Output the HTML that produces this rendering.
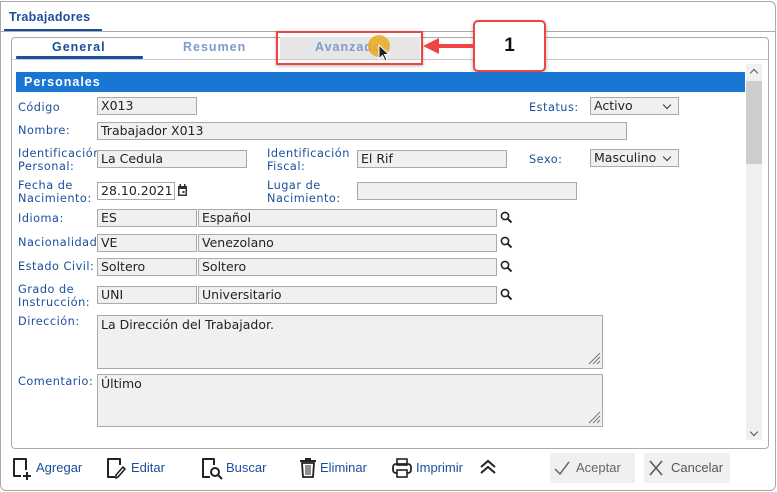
<!DOCTYPE html>
<html><head><meta charset="utf-8"><style>
*{box-sizing:border-box;margin:0;padding:0}
body{width:777px;height:492px;background:#fff;position:relative;overflow:hidden;font-family:"DejaVu Sans","Liberation Sans",sans-serif}
.a{position:absolute}
.lb{position:absolute;color:#1a4f9c;font-size:11.3px;line-height:13px;letter-spacing:0.5px}
.in{position:absolute;background:#f0f0f0;border:1px solid #aaa;height:18px;font-size:12.5px;line-height:16px;padding-left:3px;color:#222;white-space:nowrap;overflow:hidden}
.sel::after{content:"";position:absolute;right:8px;top:4px;width:5px;height:5px;border-right:1.5px solid #333;border-bottom:1.5px solid #333;transform:rotate(45deg)}
.sel{background:#f0f0f0}
.mag{position:absolute;width:13px;height:13px}
.ft{position:absolute;top:460px;font-size:13px;color:#1a4f9c;font-family:"Liberation Sans",sans-serif}
</style></head><body>
<div class="a" style="left:0;top:1px;width:776px;height:490px;border:1px solid #aaa;border-radius:0 6px 6px 6px"></div>
<div class="a" style="left:1px;top:31px;width:774px;height:1px;background:#aaa"></div>
<div class="a" style="left:9px;top:10px;font-size:12.5px;font-weight:bold;color:#1a4f9c;font-family:'Liberation Sans',sans-serif;letter-spacing:0.3px">Trabajadores</div>
<div class="a" style="left:4px;top:29px;width:98px;height:2px;background:#1a4f9c"></div>
<div class="a" style="left:11px;top:37px;width:758px;height:412px;border:1px solid #aaa;border-radius:4px"></div>
<div class="a" style="left:12px;top:59px;width:756px;height:1px;background:#ccc"></div>
<div class="a" style="left:52px;top:40px;font-size:12.5px;font-weight:bold;color:#1a4f9c;letter-spacing:1px;font-family:'Liberation Sans',sans-serif">General</div>
<div class="a" style="left:16px;top:56px;width:127px;height:3px;background:#1a4f9c;border-radius:1px"></div>
<div class="a" style="left:183px;top:40px;font-size:12.5px;font-weight:bold;color:#7d9ccc;letter-spacing:1px;font-family:'Liberation Sans',sans-serif">Resumen</div>
<div class="a" style="left:280px;top:37px;width:140px;height:22px;background:#e6e6e6"></div>
<div class="a" style="left:315px;top:40px;font-size:12.5px;font-weight:bold;color:#7d9ccc;letter-spacing:1px;font-family:'Liberation Sans',sans-serif">Avanzado</div>
<div class="a" style="left:368px;top:35px;width:22px;height:22px;border-radius:50%;background:rgba(232,170,30,0.85)"></div>
<svg class="a" style="left:378px;top:44px" width="14" height="20"><path d="M1 1 L1 15 L4.5 11.5 L7 17 L9 16 L6.5 10.5 L11 10.5 Z" fill="#222" stroke="#fff" stroke-width="1"/></svg>
<div class="a" style="left:276px;top:31px;width:147px;height:34px;border:2px solid #ee4444;box-shadow:0 1px 3px rgba(0,0,0,.3)"></div>
<div class="a" style="left:473px;top:20px;width:73px;height:52px;border:2px solid #ee4444;border-radius:5px;background:#fff;box-shadow:0 2px 4px rgba(0,0,0,.3);font:bold 19px 'Liberation Sans',sans-serif;text-align:center;line-height:48px;color:#111">1</div>
<div class="a" style="left:436px;top:44px;width:37px;height:4px;background:#ee4444"></div>
<svg class="a" style="left:423px;top:38px" width="16" height="16"><path d="M0 8 L16 0 L16 16 Z" fill="#ee4444"/></svg>
<div class="a" style="left:746px;top:64px;width:16px;height:376px;background:#f0f0f0"></div>
<div class="a" style="left:746px;top:81px;width:16px;height:83px;background:#cdcdcd"></div>
<div class="a" style="left:751px;top:70px;width:6px;height:6px;border-left:1.5px solid #555;border-top:1.5px solid #555;transform:rotate(45deg)"></div>
<div class="a" style="left:751px;top:429px;width:6px;height:6px;border-right:1.5px solid #555;border-bottom:1.5px solid #555;transform:rotate(45deg)"></div>
<div class="a" style="left:16px;top:72px;width:729px;height:20px;background:#1976d2;color:#fff;font-weight:bold;font-size:12.5px;line-height:20px;padding-left:8px;letter-spacing:1px;font-family:'Liberation Sans',sans-serif">Personales</div>
<div class="lb" style="left:18px;top:101px">Código</div>
<div class="in" style="left:97px;top:97px;width:100px">X013</div>
<div class="lb" style="left:529px;top:101px">Estatus:</div>
<div class="in sel" style="left:590px;top:97px;width:89px">Activo</div>
<div class="lb" style="left:18px;top:124px">Nombre:</div>
<div class="in" style="left:97px;top:122px;width:530px">Trabajador X013</div>
<div class="lb" style="left:18px;top:147px">Identificación<br>Personal:</div>
<div class="in" style="left:97px;top:150px;width:150px">La Cedula</div>
<div class="lb" style="left:267px;top:147px">Identificación<br>Fiscal:</div>
<div class="in" style="left:357px;top:150px;width:150px">El Rif</div>
<div class="lb" style="left:529px;top:153px">Sexo:</div>
<div class="in sel" style="left:590px;top:149px;width:89px">Masculino</div>
<div class="lb" style="left:18px;top:179px">Fecha de<br>Nacimiento:</div>
<div class="in" style="left:97px;top:182px;width:78px;background:#fff">28.10.2021</div>
<svg class="a" style="left:177px;top:184px" width="11" height="13"><rect x="1" y="2" width="9" height="10" fill="#333"/><rect x="2.5" y="5" width="6" height="5.5" fill="#fff"/><rect x="2.5" y="0" width="1.5" height="3" fill="#333"/><rect x="7" y="0" width="1.5" height="3" fill="#333"/><rect x="5.5" y="7" width="2" height="2" fill="#333"/></svg>
<div class="lb" style="left:267px;top:179px">Lugar de<br>Nacimiento:</div>
<div class="in" style="left:357px;top:182px;width:220px"></div>
<div class="lb" style="left:18px;top:212px">Idioma:</div>
<div class="in" style="left:97px;top:209px;width:100px">ES</div>
<div class="in" style="left:198px;top:209px;width:299px">Español</div>
<div class="lb" style="left:18px;top:236px">Nacionalidad:</div>
<div class="in" style="left:97px;top:234px;width:100px">VE</div>
<div class="in" style="left:198px;top:234px;width:299px">Venezolano</div>
<div class="lb" style="left:18px;top:260px">Estado Civil:</div>
<div class="in" style="left:97px;top:258px;width:100px">Soltero</div>
<div class="in" style="left:198px;top:258px;width:299px">Soltero</div>
<div class="lb" style="left:18px;top:283px">Grado de<br>Instrucción:</div>
<div class="in" style="left:97px;top:286px;width:100px">UNI</div>
<div class="in" style="left:198px;top:286px;width:299px">Universitario</div>
<svg class="mag" style="left:500px;top:211px" viewBox="0 0 13 13"><circle cx="5" cy="5" r="3.6" fill="none" stroke="#222" stroke-width="1.6"/><path d="M7.7 7.7 L11.5 11.5" stroke="#222" stroke-width="2"/></svg>
<svg class="mag" style="left:500px;top:236px" viewBox="0 0 13 13"><circle cx="5" cy="5" r="3.6" fill="none" stroke="#222" stroke-width="1.6"/><path d="M7.7 7.7 L11.5 11.5" stroke="#222" stroke-width="2"/></svg>
<svg class="mag" style="left:500px;top:260px" viewBox="0 0 13 13"><circle cx="5" cy="5" r="3.6" fill="none" stroke="#222" stroke-width="1.6"/><path d="M7.7 7.7 L11.5 11.5" stroke="#222" stroke-width="2"/></svg>
<svg class="mag" style="left:500px;top:288px" viewBox="0 0 13 13"><circle cx="5" cy="5" r="3.6" fill="none" stroke="#222" stroke-width="1.6"/><path d="M7.7 7.7 L11.5 11.5" stroke="#222" stroke-width="2"/></svg>
<div class="lb" style="left:18px;top:315px">Dirección:</div>
<div class="in" style="left:97px;top:315px;width:506px;height:54px;line-height:18px">La Dirección del Trabajador.</div>
<div class="lb" style="left:18px;top:375px">Comentario:</div>
<div class="in" style="left:97px;top:374px;width:506px;height:53px;line-height:18px">Último</div>
<svg class="a" style="left:587px;top:351px" width="14" height="14"><path d="M13 2 L2 13 M13 6 L6 13 M13 10 L10 13" stroke="#777" stroke-width="1"/></svg>
<svg class="a" style="left:587px;top:410px" width="14" height="14"><path d="M13 2 L2 13 M13 6 L6 13 M13 10 L10 13" stroke="#777" stroke-width="1"/></svg>
<svg class="a" style="left:12px;top:457px" width="22" height="24"><path d="M9 19 H2 V2 H14 V13" fill="none" stroke="#222" stroke-width="2" stroke-linejoin="round"/><path d="M15 15 V23 M11 19 H19" stroke="#222" stroke-width="2"/></svg>
<div class="ft" style="left:36px">Agregar</div>
<svg class="a" style="left:106px;top:457px" width="22" height="24"><path d="M9 20 H2 V2 H14 V8" fill="none" stroke="#222" stroke-width="2" stroke-linejoin="round"/><path d="M10 21 L10 18 L17 10 L19 12 L12 20 Z" fill="none" stroke="#222" stroke-width="1.6"/></svg>
<div class="ft" style="left:131px">Editar</div>
<svg class="a" style="left:201px;top:457px" width="24" height="24"><path d="M9 20 H2 V2 H13 V8" fill="none" stroke="#222" stroke-width="2" stroke-linejoin="round"/><circle cx="14" cy="15" r="4" fill="none" stroke="#222" stroke-width="2"/><path d="M17 18 L21 22" stroke="#222" stroke-width="2"/></svg>
<div class="ft" style="left:226px">Buscar</div>
<svg class="a" style="left:299px;top:457px" width="18" height="22"><rect x="1" y="3" width="16" height="2" fill="#222"/><rect x="6" y="1" width="6" height="2" fill="#222"/><path d="M3 6 H15 L14 20 H4 Z" fill="none" stroke="#222" stroke-width="1.8"/><path d="M7 8 V18 M9 8 V18 M11 8 V18" stroke="#222" stroke-width="1"/></svg>
<div class="ft" style="left:320px">Eliminar</div>
<svg class="a" style="left:392px;top:457px" width="20" height="22"><rect x="5" y="2" width="10" height="6" fill="none" stroke="#222" stroke-width="1.6"/><rect x="1" y="7" width="18" height="9" rx="3" fill="none" stroke="#222" stroke-width="1.8"/><rect x="5" y="13" width="10" height="7" fill="#fff" stroke="#222" stroke-width="1.6"/></svg>
<div class="ft" style="left:416px">Imprimir</div>
<svg class="a" style="left:478px;top:458px" width="20" height="18"><path d="M3 9 L10 3 L17 9 M3 15 L10 9 L17 15" fill="none" stroke="#222" stroke-width="2"/></svg>
<div class="a" style="left:550px;top:453px;width:85px;height:30px;background:#f0f0f0"></div>
<svg class="a" style="left:553px;top:459px" width="18" height="18"><path d="M2 10 L7 15 L16 3" fill="none" stroke="#666" stroke-width="1.5"/></svg>
<div class="ft" style="left:576px;color:#666">Aceptar</div>
<div class="a" style="left:644px;top:453px;width:86px;height:30px;background:#f0f0f0"></div>
<svg class="a" style="left:647px;top:459px" width="18" height="18"><path d="M3 2 L15 16 M15 2 L3 16" stroke="#555" stroke-width="1.5"/></svg>
<div class="ft" style="left:671px;color:#555">Cancelar</div>
</body></html>
